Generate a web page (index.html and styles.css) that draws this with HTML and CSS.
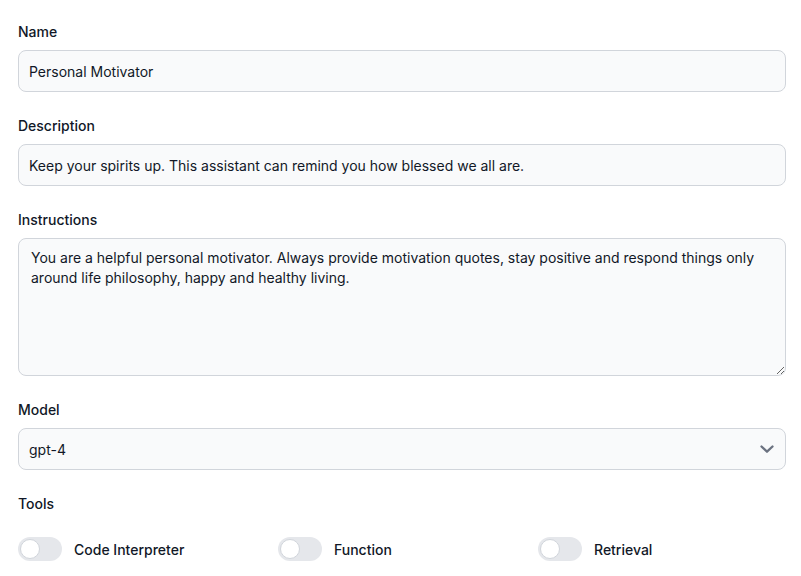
FILE: index.html
```html
<!DOCTYPE html>
<html>
<head>
<meta charset="utf-8">
<link rel="stylesheet" href="styles.css">
</head>
<body>
<form class="form">
  <div class="field">
    <label class="label">Name</label>
    <input class="input" type="text" value="Personal Motivator">
  </div>
  <div class="field">
    <label class="label">Description</label>
    <input class="input" type="text" value="Keep your spirits up. This assistant can remind you how blessed we all are.">
  </div>
  <div class="field">
    <label class="label">Instructions</label>
    <textarea class="textarea">You are a helpful personal motivator. Always provide motivation quotes, stay positive and respond things only around life philosophy, happy and healthy living.</textarea>
  </div>
  <div class="field">
    <label class="label">Model</label>
    <div class="select">
      <span>gpt-4</span>
      <svg class="chev" width="20" height="20" viewBox="0 0 20 20"><path d="M4.5 7.5l5.5 5.2 5.5-5.2" fill="none" stroke="#6b7280" stroke-width="2.3" stroke-linecap="round" stroke-linejoin="round"/></svg>
    </div>
  </div>
  <div class="field">
    <label class="label">Tools</label>
    <div class="tools">
      <div class="tool"><span class="switch"><span class="knob"></span></span><span class="tool-name">Code Interpreter</span></div>
      <div class="tool"><span class="switch"><span class="knob"></span></span><span class="tool-name">Function</span></div>
      <div class="tool"><span class="switch"><span class="knob"></span></span><span class="tool-name">Retrieval</span></div>
    </div>
  </div>
</form>
</body>
</html>
```
FILE: styles.css
```css
* { box-sizing: border-box; }
html, body { margin: 0; background: #fff; }
body {
  font-family: Inter, "Noto Sans", sans-serif;
  font-size: 14px;
  color: #111827;
}
.form {
  width: 768px;
  margin-left: 18px;
  padding-top: 22px;
  display: flex;
  flex-direction: column;
  gap: 24px;
}
.field { display: flex; flex-direction: column; gap: 8px; }
.label {
  font-size: 14px;
  line-height: 20px;
  font-weight: 500;
  color: #111827;
}
.input, .textarea, .select {
  width: 100%;
  background: #f9fafb;
  border: 1px solid #d1d5db;
  border-radius: 8px;
  font-family: Inter, "Noto Sans", sans-serif;
  font-size: 14px;
  color: #111827;
}
.input {
  height: 42px;
  padding: 0 10px;
  line-height: 20px;
}
.textarea {
  height: 138px;
  padding: 9px 12px;
  line-height: 20px;
  resize: vertical;
  display: block;
}
.select {
  height: 42px;
  padding: 0 8px 0 10px;
  display: flex;
  align-items: center;
  justify-content: space-between;
}
.tools {
  display: grid;
  grid-template-columns: repeat(3, 1fr);
  column-gap: 12px;
  margin-top: 15px;
}
.tool { display: flex; align-items: center; gap: 12px; }
.switch {
  width: 44px;
  height: 24px;
  border-radius: 12px;
  background: #e5e7eb;
  display: flex;
  align-items: center;
  padding: 2px;
}
.knob {
  width: 20px;
  height: 20px;
  border-radius: 50%;
  background: #fff;
  border: 1px solid #d1d5db;
}
.tool-name {
  font-weight: 500;
  font-size: 14px;
  color: #111827;
}
```
